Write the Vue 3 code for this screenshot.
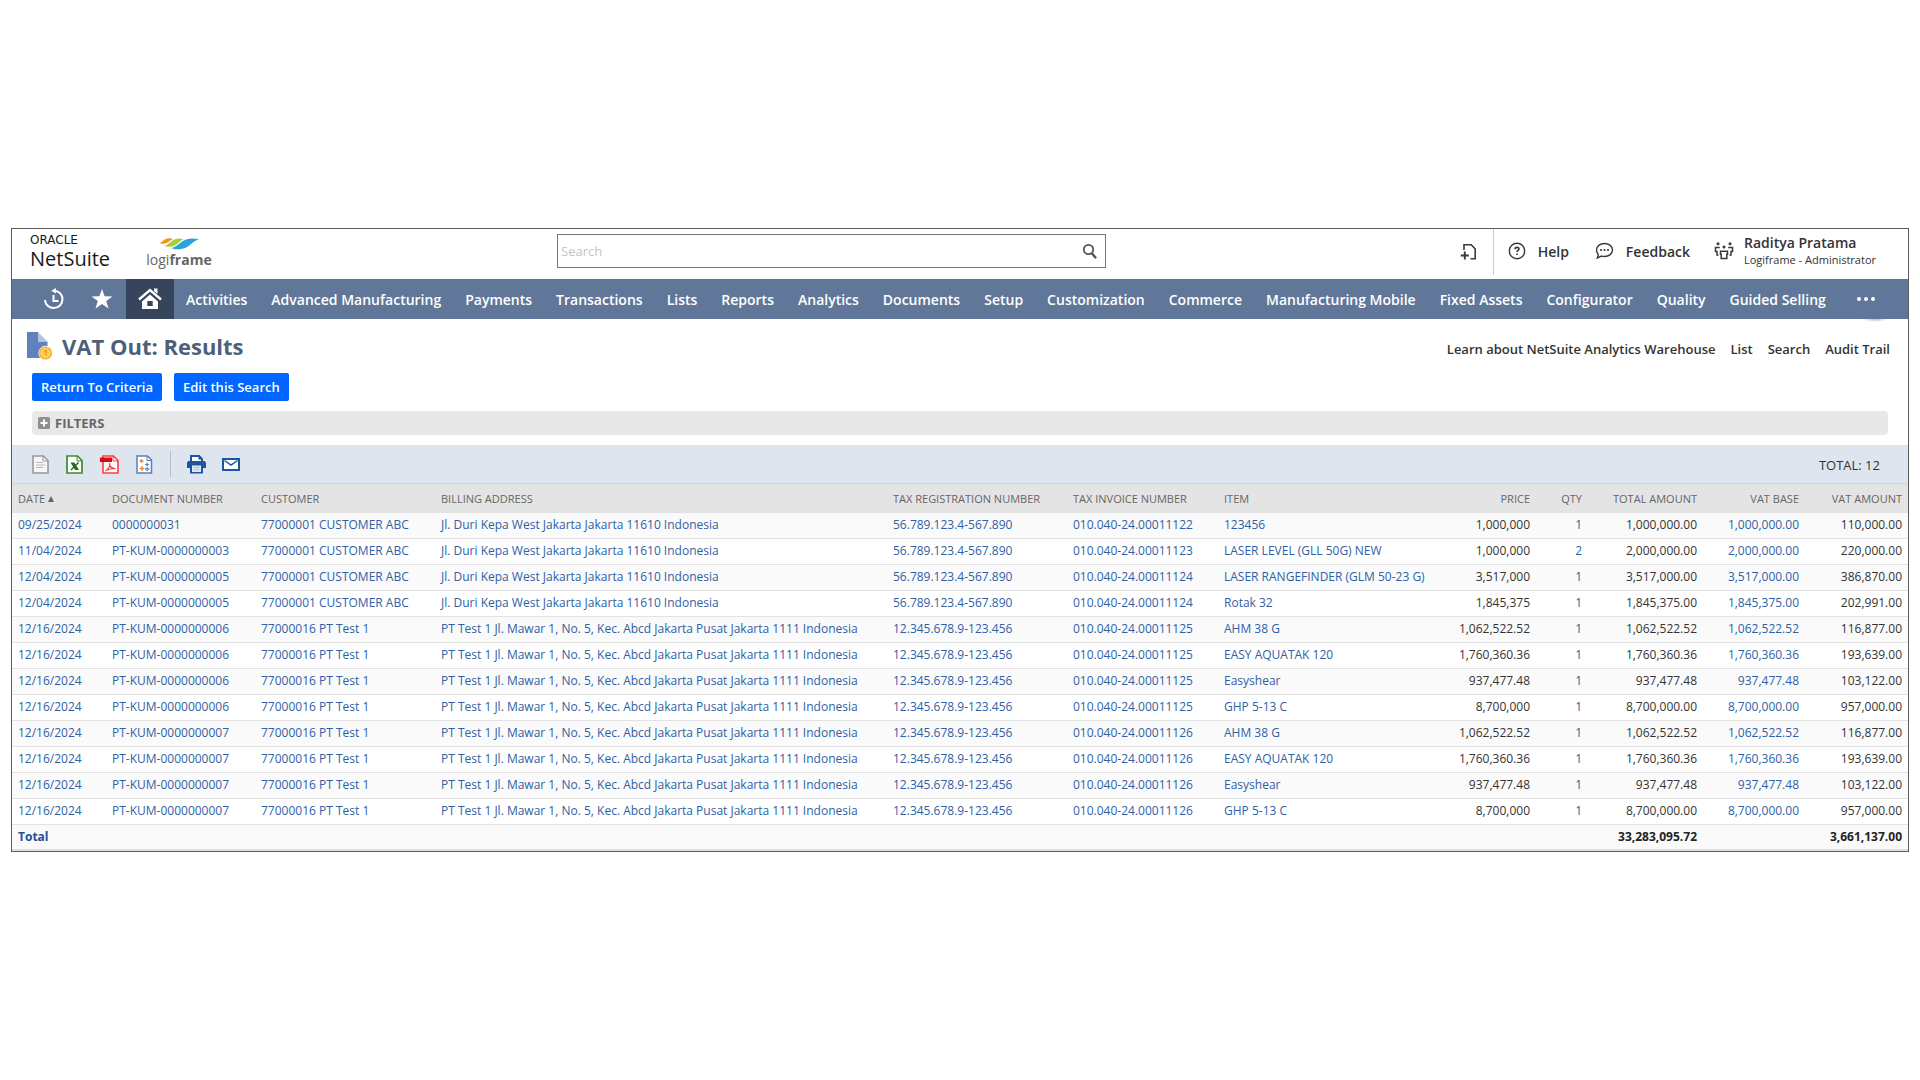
<script setup>
const navItems = [
  'Activities', 'Advanced Manufacturing', 'Payments', 'Transactions', 'Lists', 'Reports',
  'Analytics', 'Documents', 'Setup', 'Customization', 'Commerce', 'Manufacturing Mobile',
  'Fixed Assets', 'Configurator', 'Quality', 'Guided Selling',
]

const pageLinks = ['Learn about NetSuite Analytics Warehouse', 'List', 'Search', 'Audit Trail']

const columns = [
  { key: 'date', label: 'Date', sorted: true, link: true },
  { key: 'doc', label: 'Document Number', link: true },
  { key: 'customer', label: 'Customer', link: true },
  { key: 'address', label: 'Billing Address', link: true },
  { key: 'taxReg', label: 'Tax Registration Number', link: true },
  { key: 'taxInv', label: 'Tax Invoice Number', link: true },
  { key: 'item', label: 'Item', link: true },
  { key: 'price', label: 'Price', numeric: true },
  { key: 'qty', label: 'Qty', numeric: true, link: true },
  { key: 'total', label: 'Total Amount', numeric: true },
  { key: 'base', label: 'VAT Base', numeric: true, link: true },
  { key: 'vat', label: 'VAT Amount', numeric: true },
]

const abc = {
  customer: '77000001 CUSTOMER ABC',
  address: 'Jl. Duri Kepa West Jakarta Jakarta 11610 Indonesia',
  taxReg: '56.789.123.4-567.890',
}
const test = {
  customer: '77000016 PT Test 1',
  address: 'PT Test 1 Jl. Mawar 1, No. 5, Kec. Abcd Jakarta Pusat Jakarta 1111 Indonesia',
  taxReg: '12.345.678.9-123.456',
}

const row = (party, date, doc, inv, item, price, qty, total, vat) => ({
  ...party, date, doc, taxInv: '010.040-24.000' + inv, item, price, qty, total, base: total, vat,
})

const testRows = (doc, inv) => [
  row(test, '12/16/2024', doc, inv, 'AHM 38 G', '1,062,522.52', '1', '1,062,522.52', '116,877.00'),
  row(test, '12/16/2024', doc, inv, 'EASY AQUATAK 120', '1,760,360.36', '1', '1,760,360.36', '193,639.00'),
  row(test, '12/16/2024', doc, inv, 'Easyshear', '937,477.48', '1', '937,477.48', '103,122.00'),
  row(test, '12/16/2024', doc, inv, 'GHP 5-13 C', '8,700,000', '1', '8,700,000.00', '957,000.00'),
]

const rows = [
  row(abc, '09/25/2024', '0000000031', '11122', '123456', '1,000,000', '1', '1,000,000.00', '110,000.00'),
  row(abc, '11/04/2024', 'PT-KUM-0000000003', '11123', 'LASER LEVEL (GLL 50G) NEW', '1,000,000', '2', '2,000,000.00', '220,000.00'),
  row(abc, '12/04/2024', 'PT-KUM-0000000005', '11124', 'LASER RANGEFINDER (GLM 50-23 G)', '3,517,000', '1', '3,517,000.00', '386,870.00'),
  row(abc, '12/04/2024', 'PT-KUM-0000000005', '11124', 'Rotak 32', '1,845,375', '1', '1,845,375.00', '202,991.00'),
  ...testRows('PT-KUM-0000000006', '11125'),
  ...testRows('PT-KUM-0000000007', '11126'),
]
</script>

<template>
  <div class="app">
    <header class="topbar">
      <div class="brand">
        <span class="oracle">ORACLE</span>
        <span class="netsuite">NetSuite</span>
      </div>
      <div class="company">
        <svg width="40" height="12" viewBox="0 0 40 12" aria-hidden="true">
          <path d="M0 5C3.500 4.500 4.500 1.200 8.500.5c2-.4 4-.2 5.500.4C10.500 2.200 9.500 4.800 6 5.500 4 5.900 1.500 5.800 0 5z" fill="#f7941e" />
          <path d="M4.500 8C10 7.500 11 2.800 16 1.200c3-.9 6-.7 8.500 0C20 3 18.500 6.800 14 8.200c-3 .9-7 .8-9.500-.2z" fill="#a6ce39" />
          <path d="M12 10C18.500 9 20.500 3.800 27 1.500c4-1.300 9-1.200 13-.2-6 1.500-8 6.200-14 8.700-4.500 1.600-10 1.800-14 0z" fill="#29a3dc" />
        </svg>
        <span class="company-name">logi<b>frame</b></span>
      </div>

      <form class="search" role="search" @submit.prevent>
        <input type="text" placeholder="Search" aria-label="Search" />
        <button type="submit" aria-label="Run search">
          <svg width="16" height="17" viewBox="0 0 16 17" fill="none" stroke="#555">
            <circle cx="6.500" cy="6.500" r="4.700" stroke-width="1.800" />
            <path d="M9.800 10.200l4.200 5" stroke-width="2.400" />
          </svg>
        </button>
      </form>

      <div class="tools">
        <button class="create" type="button" aria-label="Create new">
          <svg width="17" height="18" viewBox="0 0 17 18" fill="none" stroke="#3a3a3a" stroke-width="1.600">
            <path d="M4 7V1.800h7.200L15.200 6v9.700H10.500" />
            <path d="M4.800 8.500v8M.8 12.500h8" stroke-width="1.900" />
          </svg>
        </button>
        <a class="tool help" href="#">
          <svg width="18" height="18" viewBox="0 0 18 18" fill="none" stroke="#3a3a3a" stroke-width="1.400">
            <circle cx="9" cy="9" r="7.700" />
            <path d="M7 7.300c0-1.200.9-1.900 2-1.900s2 .7 2 1.700c0 1.300-2 1.400-2 3M9 11.500v1.500" stroke-width="1.600" />
          </svg>
          Help
        </a>
        <a class="tool feedback" href="#">
          <svg width="19" height="18" viewBox="0 0 19 18">
            <path d="M9.500 1.500c4.600 0 8 2.900 8 6.500s-3.400 6.500-8 6.500c-1 0-2-.1-2.900-.4L2.300 16l1-3.500C2.100 11.300 1.500 9.700 1.500 8c0-3.600 3.400-6.500 8-6.500z" fill="none" stroke="#3a3a3a" stroke-width="1.400" />
            <g fill="#3a3a3a"><circle cx="6" cy="8" r="1.100" /><circle cx="9.500" cy="8" r="1.100" /><circle cx="13" cy="8" r="1.100" /></g>
          </svg>
          Feedback
        </a>
        <a class="tool role" href="#">
          <svg width="20" height="18" viewBox="0 0 20 18">
            <g fill="#3a3a3a"><circle cx="4" cy="1.800" r="1.500" /><circle cx="16" cy="1.800" r="1.500" /><circle cx="10" cy="5" r="1.500" /></g>
            <g fill="none" stroke="#3a3a3a" stroke-width="1.500">
              <path d="M5.800 5.500H1.500V9.500H3V13H4.500M14.200 5.500h4.300v4H17V13H15.500" />
              <path d="M6.500 9.200h7v3h-.7v4.300H7.200v-4.300h-.7z" />
            </g>
          </svg>
          <span class="user">
            <span class="user-name">Raditya Pratama</span>
            <span class="user-role">Logiframe - Administrator</span>
          </span>
        </a>
      </div>
    </header>

    <nav class="nav" aria-label="Main">
      <a class="nav-icon" href="#" aria-label="Recent records">
        <svg width="22" height="22" viewBox="0 0 22 22" fill="none" stroke="#fff" stroke-width="2">
          <path d="M2 12c.3 4.600 4 8 8.800 8 5 0 8.700-3.800 8.700-8.700 0-5-3.700-8.500-8.500-8.600" />
          <path d="M13 0L8.200 2.800 13 5.600z" fill="#fff" stroke="none" />
          <path d="M10.500 7v6h5" />
        </svg>
      </a>
      <a class="nav-icon" href="#" aria-label="Shortcuts">
        <svg width="22" height="20" viewBox="0 0 22 20"><path d="M11 0l2.600 7.200 7.800.2-6.200 4.700 2.300 7.400L11 15.100l-6.500 4.400 2.300-7.400L.6 7.400l7.800-.2z" fill="#fff" /></svg>
      </a>
      <a class="nav-icon current" href="#" aria-label="Home">
        <svg width="24" height="22" viewBox="0 0 24 22">
          <path d="M16 .5h3.500V6l-3.500-3z" fill="#fff" />
          <path d="M1 11.500L12 2l11 9.500" fill="none" stroke="#fff" stroke-width="2.400" />
          <path d="M12 6.500l8 7V21H4v-7.500z" fill="#fff" />
          <path d="M9.300 13h5.400v5H9.300z" fill="#36455c" />
        </svg>
      </a>
      <a v-for="item in navItems" :key="item" class="nav-item" href="#">{{ item }}</a>
      <button class="more" type="button" aria-label="More">
        <svg width="18" height="4" viewBox="0 0 18 4" fill="#fff"><circle cx="2" cy="2" r="2" /><circle cx="9" cy="2" r="2" /><circle cx="16" cy="2" r="2" /></svg>
      </button>
    </nav>

    <main>
      <div class="title-row">
        <svg class="title-icon" width="26" height="29" viewBox="0 0 26 29" aria-hidden="true">
          <path d="M0 0h11v9.500h9.500V26H0z" fill="#5f82bd" />
          <path d="M11 0l9.500 9.500H11z" fill="#b4c5e2" />
          <circle cx="18.500" cy="21" r="7.200" fill="#fff" />
          <circle cx="18.500" cy="21" r="6.600" fill="#f7b52c" />
          <circle cx="18.500" cy="21" r="4.300" fill="#fbc95a" stroke="#fde3a4" stroke-width="1" />
          <path d="M17 19.500l2-1v5" fill="none" stroke="#f0a010" stroke-width="1.500" />
        </svg>
        <h1>VAT Out: Results</h1>
        <div class="page-links">
          <a v-for="link in pageLinks" :key="link" href="#">{{ link }}</a>
        </div>
      </div>

      <div class="actions">
        <button type="button">Return To Criteria</button>
        <button type="button">Edit this Search</button>
      </div>

      <button class="filters" type="button" aria-expanded="false">
        <svg width="12" height="12" viewBox="0 0 12 12" aria-hidden="true">
          <rect width="12" height="12" rx="1.500" fill="#8f8f8f" />
          <path d="M6 2.500v7M2.500 6h7" stroke="#fff" stroke-width="2" />
        </svg>
        FILTERS
      </button>

      <div class="toolbar">
        <button type="button" class="export" aria-label="Export CSV">
          <svg width="17" height="19" viewBox="0 0 17 19">
            <path d="M1 1h10.500L16 5.500V18H1z" fill="#f6f6f6" stroke="#999" stroke-width="1.600" />
            <path d="M11 1v5h5" fill="none" stroke="#999" />
            <path d="M4 7.500h7M4 10h9M4 12.500h7" stroke="#bbb" />
          </svg>
        </button>
        <button type="button" class="export" aria-label="Export Excel">
          <svg width="17" height="19" viewBox="0 0 17 19">
            <path d="M1 1h10.500L16 5.500V18H1z" fill="#fff" stroke="#3e8a2e" stroke-width="1.700" />
            <path d="M11 1v5h5" fill="none" stroke="#3e8a2e" />
            <path d="M4.500 7.500h3.800l4.700 7.500H9.200z" fill="#226b16" />
            <path d="M12.500 7.500L5 15" stroke="#226b16" stroke-width="1.500" />
          </svg>
        </button>
        <button type="button" class="export" aria-label="Export PDF">
          <svg width="19" height="19" viewBox="0 0 19 19">
            <path d="M3 1h10.500L18 5.500V18H3z" fill="#fff" stroke="#f8403c" stroke-width="1.600" />
            <path d="M13 1v5h5" fill="none" stroke="#f8403c" />
            <path d="M0 2.500h12v4.500H0z" fill="#d90b0b" />
            <path d="M9.500 8c1 3-1 6-4 8M9.500 10c1 2.500 3 3.500 6 3.700-3-.5-6 .3-8 1.300" fill="none" stroke="#f03a36" stroke-width="1.200" />
          </svg>
        </button>
        <button type="button" class="export" aria-label="Open in workbook">
          <svg width="17" height="19" viewBox="0 0 17 19">
            <path d="M1 1h10.500L15.500 5v13H1z" fill="#fff" stroke="#5d7fbc" stroke-width="1.500" />
            <path d="M11 1v4.500h4.500" fill="none" stroke="#5d7fbc" />
            <path d="M5.500 4v4M3.500 6h4M6 11v5M3.500 13.500h5" stroke="#e88a2a" stroke-width="1.300" />
            <path d="M11 7.500v4M9 9.500h4" stroke="#4a90c2" stroke-width="1.200" />
            <path d="M10.500 12.500h1.500v1h-1.500zM10.500 15h1.500v1h-1.500zM9 13.500h4.500v1H9z" fill="#3a66a8" />
          </svg>
        </button>
        <span class="divider"></span>
        <button type="button" class="output" aria-label="Print">
          <svg width="19" height="19" viewBox="0 0 19 19">
            <path d="M3 0h9.500L16 3.500V6H3z" fill="#1d56a0" />
            <path d="M5 2h6.500v2.500H14V6H5z" fill="#fff" />
            <path d="M1.500 6h16L19 7.500V13h-3v5.500H3V13H0V7.500z" fill="#1d56a0" />
            <path d="M5 10.500h9v6.500H5z" fill="#e6ecf6" />
            <path d="M6.500 12.500h6M6.500 14.800h6" stroke="#a9bede" />
          </svg>
        </button>
        <button type="button" class="output" aria-label="Email">
          <svg width="18" height="13" viewBox="0 0 18 13">
            <path d="M1 1h16v11H1z" fill="#fff" stroke="#1d56a0" stroke-width="2" />
            <path d="M2.500 2.500L9 7l6.500-4.500" fill="none" stroke="#1d56a0" stroke-width="1.500" />
          </svg>
        </button>
        <span class="count">TOTAL: 12</span>
      </div>

      <table>
        <colgroup>
          <col v-for="c in columns" :key="c.key" :class="'col-' + c.key" />
        </colgroup>
        <thead>
          <tr>
            <th v-for="c in columns" :key="c.key" scope="col" :class="{ numeric: c.numeric }">
              {{ c.label }}<svg v-if="c.sorted" class="sort" width="6" height="6" viewBox="0 0 6 6" aria-hidden="true"><path d="M3 0l3 6H0z" fill="#666" /></svg>
            </th>
          </tr>
        </thead>
        <tbody>
          <tr v-for="(r, i) in rows" :key="i">
            <td v-for="c in columns" :key="c.key" :class="{ numeric: c.numeric }">
              <a v-if="c.link" href="#">{{ r[c.key] }}</a>
              <template v-else>{{ r[c.key] }}</template>
            </td>
          </tr>
        </tbody>
        <tfoot>
          <tr>
            <th scope="row" colspan="9">Total</th>
            <td class="numeric">33,283,095.72</td>
            <td></td>
            <td class="numeric">3,661,137.00</td>
          </tr>
        </tfoot>
      </table>
    </main>
  </div>
</template>

<style>
body {
  margin: 0;
  background: #fff;
}
</style>

<style scoped>
.app {
  margin: 228px 11px 0;
  border: 1px solid #5c5c5c;
  color: #333;
  font-family: "Open Sans", "Noto Sans", sans-serif;
  font-size: 12px;
  background: #fff;
}

a {
  color: inherit;
  text-decoration: none;
}

button {
  margin: 0;
  padding: 0;
  border: 0;
  background: none;
  color: inherit;
  font: inherit;
}

svg {
  display: block;
  flex: none;
}

/* top bar */
.topbar {
  display: flex;
  align-items: center;
  height: 50px;
}

.brand {
  width: 116px;
  padding: 0 0 4px 18px;
  color: #1a1a1a;
}

.oracle {
  display: block;
  font: 12px/14px "DejaVu Sans", sans-serif;
}

.netsuite {
  display: block;
  font-size: 20px;
  line-height: 24px;
}

.company {
  display: flex;
  flex-direction: column;
  align-items: center;
  width: 66px;
  color: #666;
}

.company-name {
  font-size: 14px;
  line-height: 20px;
}

.search {
  display: flex;
  align-items: center;
  box-sizing: border-box;
  width: 549px;
  height: 34px;
  margin: 0 0 6px 345px;
  border: 1px solid #777;
}

.search input {
  flex: 1;
  min-width: 0;
  padding: 0 3px;
  border: 0;
  outline: 0;
  background: none;
  font: inherit;
  font-size: 13px;
}

.search input::placeholder {
  color: #c4c4c4;
}

.search button {
  padding-right: 7px;
}

.tools {
  display: flex;
  align-items: flex-start;
  align-self: stretch;
  margin-left: auto;
  font-size: 14px;
  font-weight: 600;
}

.create {
  display: flex;
  align-items: center;
  height: 46px;
  padding-right: 16px;
  border-right: 1px solid #ccc;
}

.tool {
  display: flex;
  align-items: center;
  gap: 12px;
  height: 44px;
}

.help {
  padding-left: 14px;
}

.feedback {
  padding-left: 26px;
}

.role {
  gap: 10px;
  padding: 0 32px 0 24px;
}

.user-name {
  display: block;
  line-height: 18px;
}

.user-role {
  display: block;
  font-size: 11px;
  font-weight: 400;
  line-height: 16px;
}

/* navigation */
.nav {
  position: relative;
  display: flex;
  align-items: stretch;
  height: 40px;
  padding-left: 18px;
  background: #607799;
  color: #fff;
  font-size: 14px;
  font-weight: 600;
}

.nav::after {
  content: "";
  position: absolute;
  top: 100%;
  right: 20px;
  width: 26px;
  height: 3px;
  background: radial-gradient(ellipse at top, #bbb, transparent 70%);
}

.nav-icon {
  display: flex;
  flex: none;
  align-items: center;
  justify-content: center;
  width: 48px;
}

.nav-icon.current {
  background: #36455c;
}

.nav-item {
  display: flex;
  align-items: center;
  padding: 0 12px;
  white-space: nowrap;
}

.more {
  margin: 0 33px 0 auto;
}

/* page heading */
.title-row {
  display: flex;
  align-items: center;
  height: 54px;
  padding: 0 18px 0 15px;
}

.title-icon {
  margin-right: 9px;
}

h1 {
  margin: 0;
  color: #4d5f79;
  font-size: 22px;
  font-weight: 700;
}

.page-links {
  display: flex;
  gap: 15px;
  margin-left: auto;
  padding-top: 6px;
  font-size: 13px;
  font-weight: 600;
}

.actions {
  display: flex;
  gap: 12px;
  padding-left: 20px;
}

.actions button {
  height: 28px;
  padding: 0 9px;
  border-radius: 2px;
  background: #06f;
  color: #fff;
  font-size: 13px;
  font-weight: 600;
}

.filters {
  display: flex;
  align-items: center;
  gap: 5px;
  width: calc(100% - 40px);
  height: 24px;
  margin: 10px 20px;
  padding-left: 6px;
  border-radius: 4px;
  background: #e8e8e8;
  color: #666;
  font-size: 13px;
  font-weight: 700;
}

.toolbar {
  display: flex;
  align-items: center;
  height: 38px;
  padding: 0 28px 0 20px;
  border-bottom: 1px solid #d2d4d8;
  background: #dfe5ef;
}

.export {
  margin-right: 17px;
}

.divider {
  width: 1px;
  height: 26px;
  background: #bbb;
}

.output {
  margin-left: 16px;
}

.count {
  margin-left: auto;
  padding-top: 2px;
  font-size: 13px;
}

/* results */
table {
  width: 100%;
  border-collapse: collapse;
  border-bottom: 2px solid #e0e0e0;
  table-layout: fixed;
}

th,
td {
  box-sizing: border-box;
  height: 26px;
  padding: 0 6px;
  text-align: left;
  white-space: nowrap;
}

.numeric {
  text-align: right;
}

thead th {
  height: 28px;
  padding-top: 2px;
  background: #e4e4e4;
  color: #666;
  font-size: 11px;
  font-weight: 400;
  text-transform: uppercase;
}

tbody td {
  padding-bottom: 2px;
}

.sort {
  display: inline-block;
  margin-left: 3px;
  vertical-align: 1px;
}

tbody tr,
tfoot tr {
  border-top: 1px solid #e2e2e2;
}

tbody tr:nth-child(odd),
tfoot tr {
  background: #fafafa;
}

tbody a {
  color: #2f5fa5;
}

tfoot {
  color: #222;
  font-weight: 700;
}

tfoot th {
  color: #1f4f96;
}

.col-date { width: 94px; }
.col-doc { width: 149px; }
.col-customer { width: 180px; }
.col-taxReg { width: 180px; }
.col-taxInv { width: 151px; }
.col-item { width: 215px; }
.col-price { width: 103px; }
.col-qty { width: 52px; }
.col-total { width: 115px; }
.col-base { width: 102px; }
.col-vat { width: 103px; }
</style>
